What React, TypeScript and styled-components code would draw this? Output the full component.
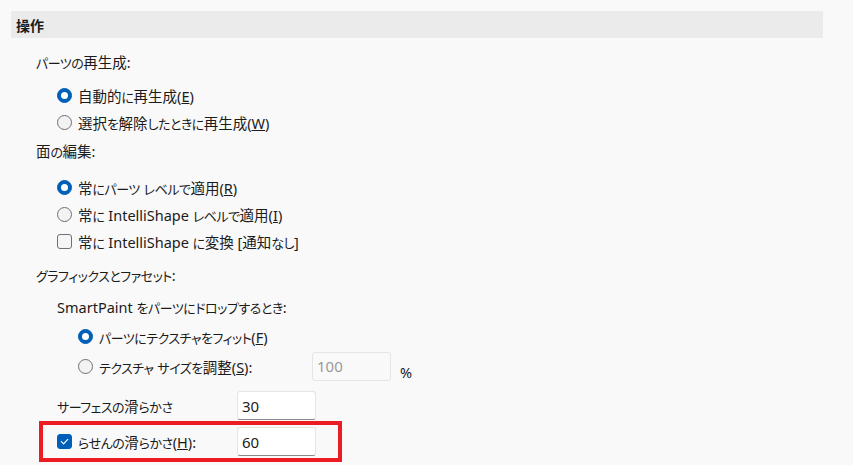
import { Fragment } from "react"
import { createGlobalStyle, styled } from "styled-components"

const GlobalStyle = createGlobalStyle`
    html, body {
        margin: 0;
        padding: 0;
        background: #f9f9f9;
    }
    body {
        font-family: "Noto Sans", "Noto Sans CJK JP", sans-serif;
        font-size: 14.5px;
        color: #1b1b1b;
        font-feature-settings: "palt";
    }
`

const Page = styled.main`
    width: 853px;
    height: 465px;
    overflow: hidden;
    box-sizing: border-box;
    padding: 11px 0 0 11px;
    display: flex;
    flex-direction: column;
`

const Header = styled.div`
    width: 812px;
    height: 27px;
    background: #ebebeb;
    display: flex;
    align-items: center;
    padding-left: 5px;
    box-sizing: border-box;
    font-weight: 700;
    font-size: 14px;
`

const Body = styled.div`
    display: flex;
    flex-direction: column;
    padding-left: 25px;
`

const Label = styled.div<{ $top: number; $indent?: number }>`
    height: 20px;
    line-height: 20px;
    margin-top: ${p => p.$top}px;
    margin-left: ${p => p.$indent ?? 0}px;
    white-space: nowrap;
`

const Row = styled.div<{ $top?: number; $indent?: number; $h?: number }>`
    height: ${p => p.$h ?? 27}px;
    display: flex;
    align-items: center;
    gap: 6px;
    margin-top: ${p => p.$top ?? 0}px;
    margin-left: ${p => p.$indent ?? 0}px;
    white-space: nowrap;
`

// Yu Gothic UI kana are smaller than Noto's
const Kana = styled.span`
    font-size: 13px;
    letter-spacing: -0.5px;
`

const RadioDot = styled.span<{ $on?: boolean }>`
    width: 15px;
    height: 15px;
    box-sizing: border-box;
    border-radius: 50%;
    flex-shrink: 0;
    display: flex;
    align-items: center;
    justify-content: center;
    background: ${p => (p.$on ? "#005fb8" : "#f3f3f3")};
    border: 1px solid ${p => (p.$on ? "#005fb8" : "#707070")};
    &::after {
        content: "";
        display: ${p => (p.$on ? "block" : "none")};
        width: 7px;
        height: 7px;
        border-radius: 50%;
        background: #fff;
    }
`

const Box = styled.span<{ $on?: boolean }>`
    width: 15px;
    height: 15px;
    box-sizing: border-box;
    border-radius: 3px;
    flex-shrink: 0;
    display: flex;
    align-items: center;
    justify-content: center;
    background: ${p => (p.$on ? "#005fb8" : "#f5f5f5")};
    border: 1px solid ${p => (p.$on ? "#005fb8" : "#707070")};
`

const FieldText = styled.span<{ $w?: number }>`
    width: ${p => (p.$w ? `${p.$w}px` : "auto")};
    flex-shrink: 0;
`

const Input = styled.div<{ $disabled?: boolean }>`
    width: 79px;
    height: 29px;
    box-sizing: border-box;
    border: 1px solid #e5e5e5;
    border-bottom-color: ${p => (p.$disabled ? "#e5e5e5" : "#8a8a8a")};
    border-radius: 3px;
    background: ${p => (p.$disabled ? "#f9f9f9" : "#ffffff")};
    color: ${p => (p.$disabled ? "#9a9a9a" : "#1b1b1b")};
    font-size: 15px;
    display: flex;
    align-items: center;
    padding-left: 4px;
    flex-shrink: 0;
`

const Unit = styled.span`
    margin-left: 3px;
    padding-top: 11px;
`

const Highlight = styled.div`
    width: 303px;
    height: 41px;
    box-sizing: border-box;
    border: 4px solid #ec1c24;
    margin: 2px 0 0 -18px;
    padding-left: 14px;
    display: flex;
    align-items: center;
`

const Check = () => (
    <svg width="9" height="9" viewBox="0 0 10 10" fill="none">
        <path d="M1.5 5.2 L4 7.6 L8.6 2.6" stroke="#fff" strokeWidth="1.3" strokeLinecap="round" strokeLinejoin="round" />
    </svg>
)

// split a string into kana / other runs
const JP = ({ text }: { text: string }) => {
    const parts = text.match(/[\u3040-\u30ff]+|[^\u3040-\u30ff]+/g) ?? []
    return (
        <>
            {parts.map((s, i) =>
                /[\u3040-\u30ff]/.test(s) ? <Kana key={i}>{s}</Kana> : <Fragment key={i}>{s}</Fragment>
            )}
        </>
    )
}

const Mn = ({ text, k, tail = ")" }: { text: string; k: string; tail?: string }) => (
    <>
        <JP text={text} />(<u>{k}</u>{tail}
    </>
)

const App = () => {
    return (
        <>
            <GlobalStyle />
            <Page>
                <Header>操作</Header>
                <Body>
                    <Label $top={14}><JP text="パーツの再生成:" /></Label>
                    <Row $top={10} $indent={21}>
                        <RadioDot $on />
                        <span><Mn text="自動的に再生成" k="E" /></span>
                    </Row>
                    <Row $indent={21}>
                        <RadioDot />
                        <span><Mn text="選択を解除したときに再生成" k="W" /></span>
                    </Row>

                    <Label $top={5}><JP text="面の編集:" /></Label>
                    <Row $top={13} $indent={21}>
                        <RadioDot $on />
                        <span><Mn text="常にパーツ レベルで適用" k="R" /></span>
                    </Row>
                    <Row $indent={21}>
                        <RadioDot />
                        <span><Mn text="常に IntelliShape レベルで適用" k="I" /></span>
                    </Row>
                    <Row $indent={21}>
                        <Box />
                        <span><JP text="常に IntelliShape に変換 [通知なし]" /></span>
                    </Row>

                    <Label $top={10}><JP text="グラフィックスとファセット:" /></Label>
                    <Label $top={12} $indent={21}><JP text="SmartPaint をパーツにドロップするとき:" /></Label>
                    <Row $top={6} $indent={42}>
                        <RadioDot $on />
                        <span><Mn text="パーツにテクスチャをフィット" k="F" /></span>
                    </Row>
                    <Row $top={1} $indent={42} $h={30}>
                        <RadioDot />
                        <FieldText $w={207}><Mn text="テクスチャ サイズを調整" k="S" tail="):" /></FieldText>
                        <Input $disabled>100</Input>
                        <Unit>%</Unit>
                    </Row>

                    <Row $top={10} $indent={21} $h={29}>
                        <FieldText $w={174}><JP text="サーフェスの滑らかさ" /></FieldText>
                        <Input>30</Input>
                    </Row>
                    <Row $indent={21} $h={41}>
                        <Highlight>
                            <Row $h={33}>
                                <Box $on>
                                    <Check />
                                </Box>
                                <FieldText $w={153}><Mn text="らせんの滑らかさ" k="H" tail="):" /></FieldText>
                                <Input>60</Input>
                            </Row>
                        </Highlight>
                    </Row>
                </Body>
            </Page>
        </>
    )
}

export default App
